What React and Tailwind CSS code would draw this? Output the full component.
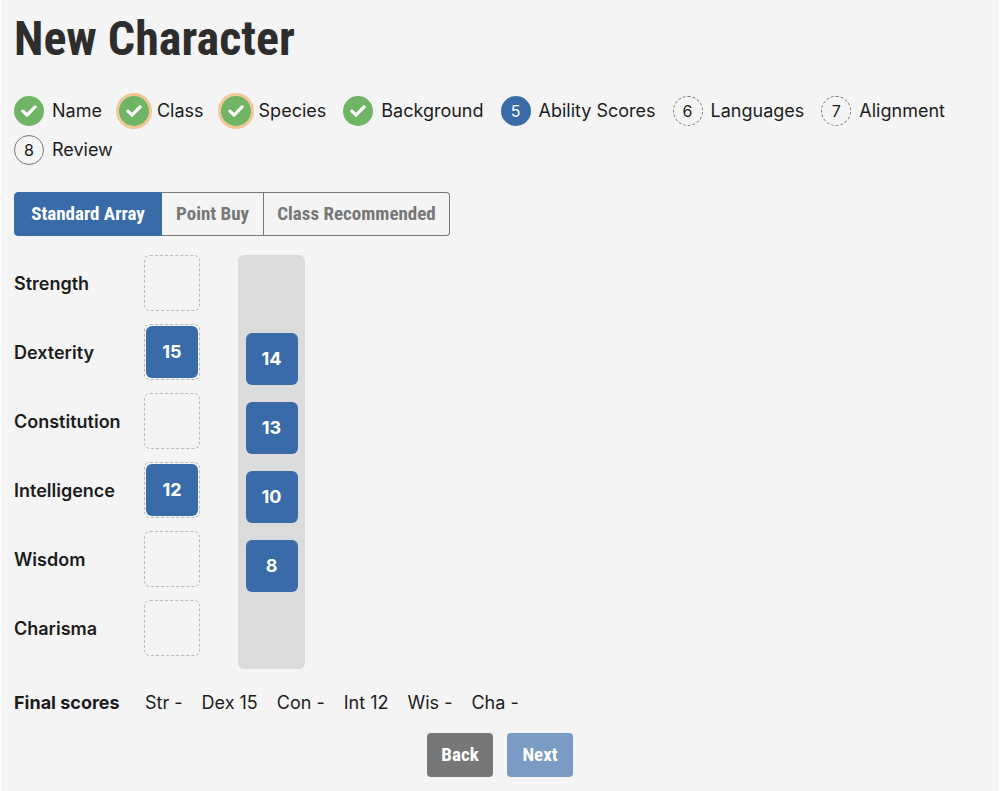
import React, { useState } from "react";

const STEPS = [
  { label: "Name", state: "done" },
  { label: "Class", state: "done", flagged: true },
  { label: "Species", state: "done", flagged: true },
  { label: "Background", state: "done" },
  { label: "Ability Scores", state: "current" },
  { label: "Languages", state: "pending" },
  { label: "Alignment", state: "pending" },
  { label: "Review", state: "open" },
];

const METHODS = ["Standard Array", "Point Buy", "Class Recommended"];

const ABILITIES = [
  { name: "Strength", short: "Str", score: null },
  { name: "Dexterity", short: "Dex", score: 15 },
  { name: "Constitution", short: "Con", score: null },
  { name: "Intelligence", short: "Int", score: 12 },
  { name: "Wisdom", short: "Wis", score: null },
  { name: "Charisma", short: "Cha", score: null },
];

const POOL = [14, 13, 10, 8];

const CIRCLE = {
  done: "bg-[#6fb565] text-white",
  current: "bg-[#386ba8] text-white",
  pending: "border border-dashed border-[#777777]",
  open: "border border-[#777777]",
};

function Check() {
  return (
    <svg viewBox="0 0 16 12" className="h-3 w-4" fill="none" stroke="currentColor" strokeWidth="3.2" strokeLinecap="round" strokeLinejoin="round" aria-hidden="true">
      <path d="M1.9 6.1 6 10.1 14.1 1.9" />
    </svg>
  );
}

function Step({ step, number }) {
  const ring = step.flagged ? " ring-3 ring-[#f1c896]" : "";
  return (
    <li>
      <a href={"#step-" + number} className="flex items-center gap-2" aria-current={step.state === "current" ? "step" : undefined}>
        <span className={"flex size-[30px] items-center justify-center rounded-full text-base " + CIRCLE[step.state] + ring}>
          {step.state === "done" ? <Check /> : number}
        </span>
        <span>{step.label}</span>
      </a>
    </li>
  );
}

function Tile({ value }) {
  return (
    <button type="button" className="size-[52px] shrink-0 rounded-md bg-[#386ba8] font-bold text-white">
      {value}
    </button>
  );
}

export default function App() {
  const [method, setMethod] = useState(METHODS[0]);
  return (
    <main className="min-h-screen border-x border-white bg-[#f4f4f4] px-[13px] pt-2 pb-[14px] font-['Inter','Liberation_Sans',sans-serif] text-lg text-[#1c1c1c]">
      <h1 className="font-['Roboto_Condensed','Liberation_Sans_Narrow',sans-serif] text-5xl leading-[62px] font-bold text-[#2d2d2d]">
        New Character
      </h1>

      <ol className="mt-[26px] flex flex-wrap gap-x-[17px] gap-y-[9px] leading-[30px]">
        {STEPS.map((step, i) => (
          <Step key={step.label} step={step} number={i + 1} />
        ))}
      </ol>

      <div className="mt-[27px] grid w-fit grid-cols-[148px_102px_186px] font-['Roboto_Condensed','Liberation_Sans_Narrow',sans-serif] text-[19px] font-bold">
        {METHODS.map((name) => (
          <button
            key={name}
            type="button"
            aria-pressed={method === name}
            onClick={() => setMethod(name)}
            className={
              "h-11 border whitespace-nowrap not-first:border-l-0 first:rounded-l-[4px] last:rounded-r-[4px] " +
              (method === name ? "border-[#386ba8] bg-[#386ba8] text-white" : "border-[#777777] text-[#777777]")
            }
          >
            {name}
          </button>
        ))}
      </div>

      <section className="mt-[19px] flex gap-[38px]">
        <ul className="flex flex-col gap-[13px]">
          {ABILITIES.map((a) => (
            <li key={a.name} className="flex items-center">
              <span className="w-[130px] pt-0.5 font-semibold">{a.name}</span>
              <span className="flex size-14 items-center justify-center rounded-md border border-dashed border-[#bbbbbb]">
                {a.score && <Tile value={a.score} />}
              </span>
            </li>
          ))}
        </ul>
        <div className="flex h-[414px] w-[67px] flex-col items-center justify-center gap-[17px] rounded-md bg-[#dbdbdb]">
          {POOL.map((v) => (
            <Tile key={v} value={v} />
          ))}
        </div>
      </section>

      <div className="mt-[19px] flex gap-[19px] leading-[30px]">
        <strong className="w-[112px] font-bold whitespace-nowrap">Final scores</strong>
        {ABILITIES.map((a) => (
          <span key={a.short}>
            {a.short} {a.score ?? "-"}
          </span>
        ))}
      </div>

      <div className="mt-[15px] flex justify-center gap-[14px] font-['Roboto_Condensed','Liberation_Sans_Narrow',sans-serif] text-[19px] font-bold text-white">
        <button type="button" className="h-11 min-w-[66px] rounded-[4px] bg-[#777777] px-3">Back</button>
        <button type="button" className="h-11 min-w-[66px] rounded-[4px] bg-[#799bc4] px-3">Next</button>
      </div>
    </main>
  );
}
